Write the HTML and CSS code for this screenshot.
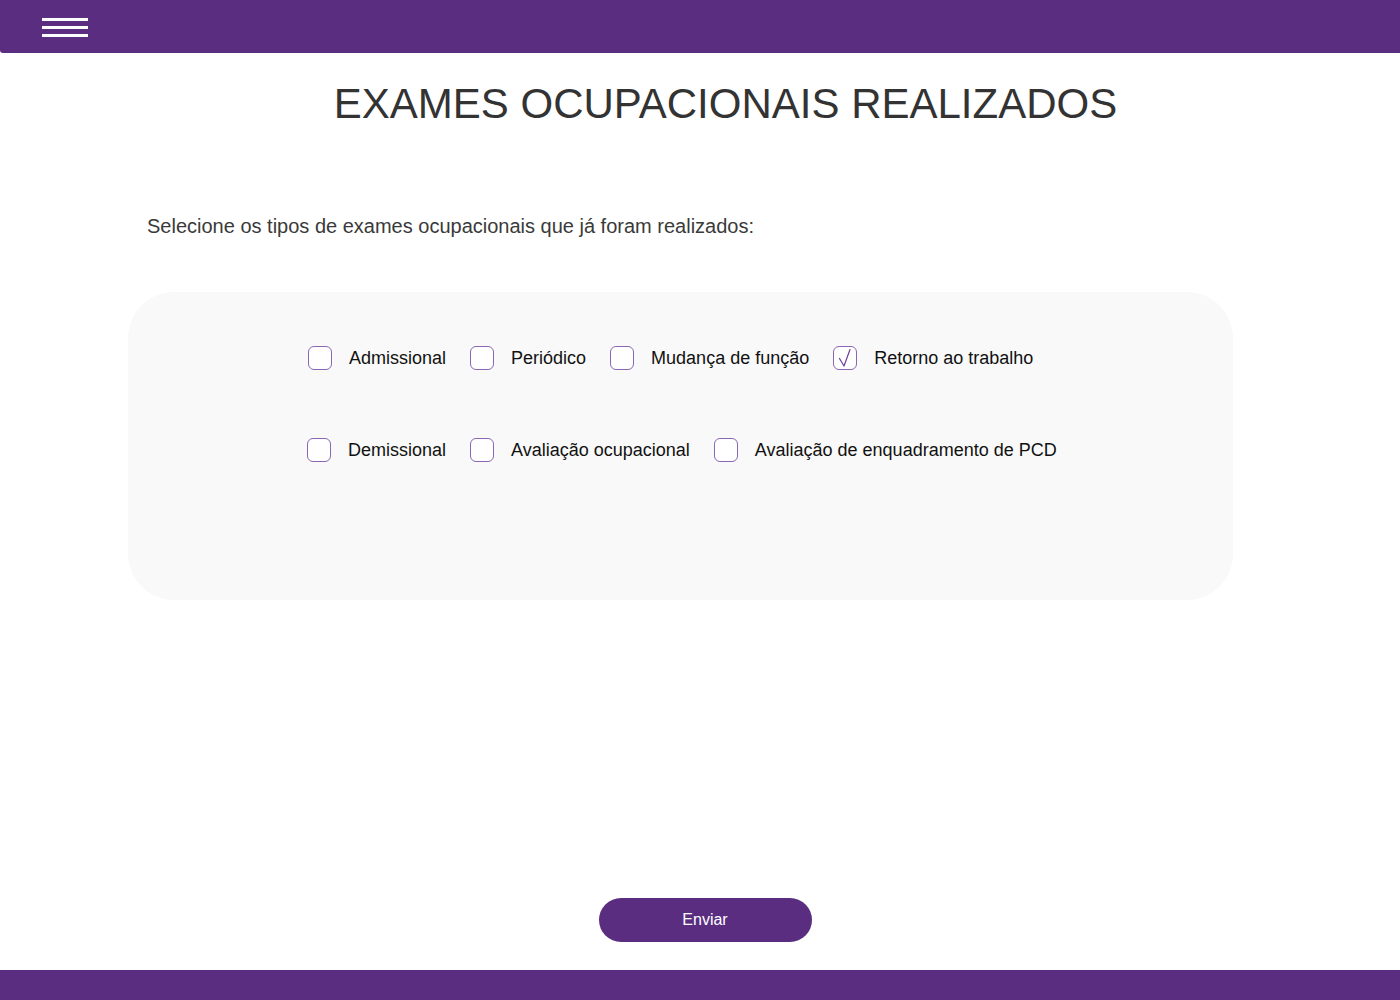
FILE: index.html
```html
<!DOCTYPE html>
<html lang="pt">
<head>
<meta charset="utf-8">
<title>Exames ocupacionais realizados</title>
<link rel="stylesheet" href="styles.css">
</head>
<body>
<header class="topbar">
  <button class="menu" aria-label="Menu"><span></span><span></span><span></span></button>
</header>
<main class="content">
  <h1 class="title">EXAMES OCUPACIONAIS REALIZADOS</h1>
  <p class="lead">Selecione os tipos de exames ocupacionais que já foram realizados:</p>
  <section class="panel">
    <div class="row row-first">
      <label class="opt"><span class="box"></span><span class="txt">Admissional</span></label>
      <label class="opt"><span class="box"></span><span class="txt">Periódico</span></label>
      <label class="opt"><span class="box"></span><span class="txt">Mudança de função</span></label>
      <label class="opt"><span class="box checked"><svg class="tick" viewBox="0 0 24 24" width="24" height="24"><path d="M6.5 12.5 L11 20 L17 3.5" fill="none" stroke="#6b3f98" stroke-width="1.2" stroke-linecap="round" stroke-linejoin="round"/></svg></span><span class="txt">Retorno ao trabalho</span></label>
    </div>
    <div class="row">
      <label class="opt"><span class="box"></span><span class="txt">Demissional</span></label>
      <label class="opt"><span class="box"></span><span class="txt">Avaliação ocupacional</span></label>
      <label class="opt"><span class="box"></span><span class="txt">Avaliação de enquadramento de PCD</span></label>
    </div>
  </section>
  <div class="actions"><button class="send">Enviar</button></div>
</main>
<footer class="bottombar"></footer>
</body>
</html>
```
FILE: styles.css
```css
* { box-sizing: border-box; }
html, body { margin: 0; padding: 0; }
body {
  width: 1400px;
  height: 1000px;
  background: #fff;
  font-family: "Liberation Sans", Arial, sans-serif;
  color: #333;
  display: flex;
  flex-direction: column;
  overflow: hidden;
}
.topbar {
  height: 53px;
  background: #5a2d81;
  border-bottom-left-radius: 3px;
  flex: none;
  display: flex;
  align-items: flex-start;
}
.menu {
  margin: 18px 0 0 42px;
  padding: 0;
  width: 46px;
  background: none;
  border: 0;
  display: flex;
  flex-direction: column;
  gap: 5px;
}
.menu span {
  display: block;
  height: 3px;
  background: #fff;
}
.content {
  flex: 1;
  display: flex;
  flex-direction: column;
}
.title {
  margin: 27px 0 0;
  text-align: center;
  padding-left: 51px;
  font-weight: 400;
  font-size: 42px;
  line-height: 48px;
  color: #333;
}
.lead {
  margin: 86px 0 0 147px;
  font-size: 20px;
  line-height: 24px;
  color: #3a3a3a;
}
.panel {
  margin: 54px 0 0 128px;
  width: 1105px;
  height: 308px;
  background: #f9f9f9;
  border-radius: 46px;
  padding: 54px 0 0 179px;
  display: flex;
  flex-direction: column;
  gap: 68px;
}
.row {
  display: flex;
  gap: 24px;
  align-items: center;
}
.row-first {
  padding-left: 1px;
}
.opt {
  display: flex;
  align-items: center;
  gap: 17px;
  height: 24px;
}
.box {
  position: relative;
  width: 24px;
  height: 24px;
  border: 1.5px solid #8a66b4;
  border-radius: 6px;
  background: #fff;
  flex: none;
}
.tick {
  position: absolute;
  left: -1.5px;
  top: -1.5px;
}
.txt {
  font-size: 18px;
  color: #111;
}
.actions {
  margin-top: auto;
  display: flex;
  justify-content: center;
  padding-left: 10px;
  padding-bottom: 28px;
}
.send {
  width: 213px;
  height: 44px;
  border: 0;
  border-radius: 22px;
  background: #5a2d81;
  color: #fff;
  font-family: "Liberation Sans", Arial, sans-serif;
  font-size: 16px;
}
.bottombar {
  height: 30px;
  background: #5a2d81;
  flex: none;
}
```
